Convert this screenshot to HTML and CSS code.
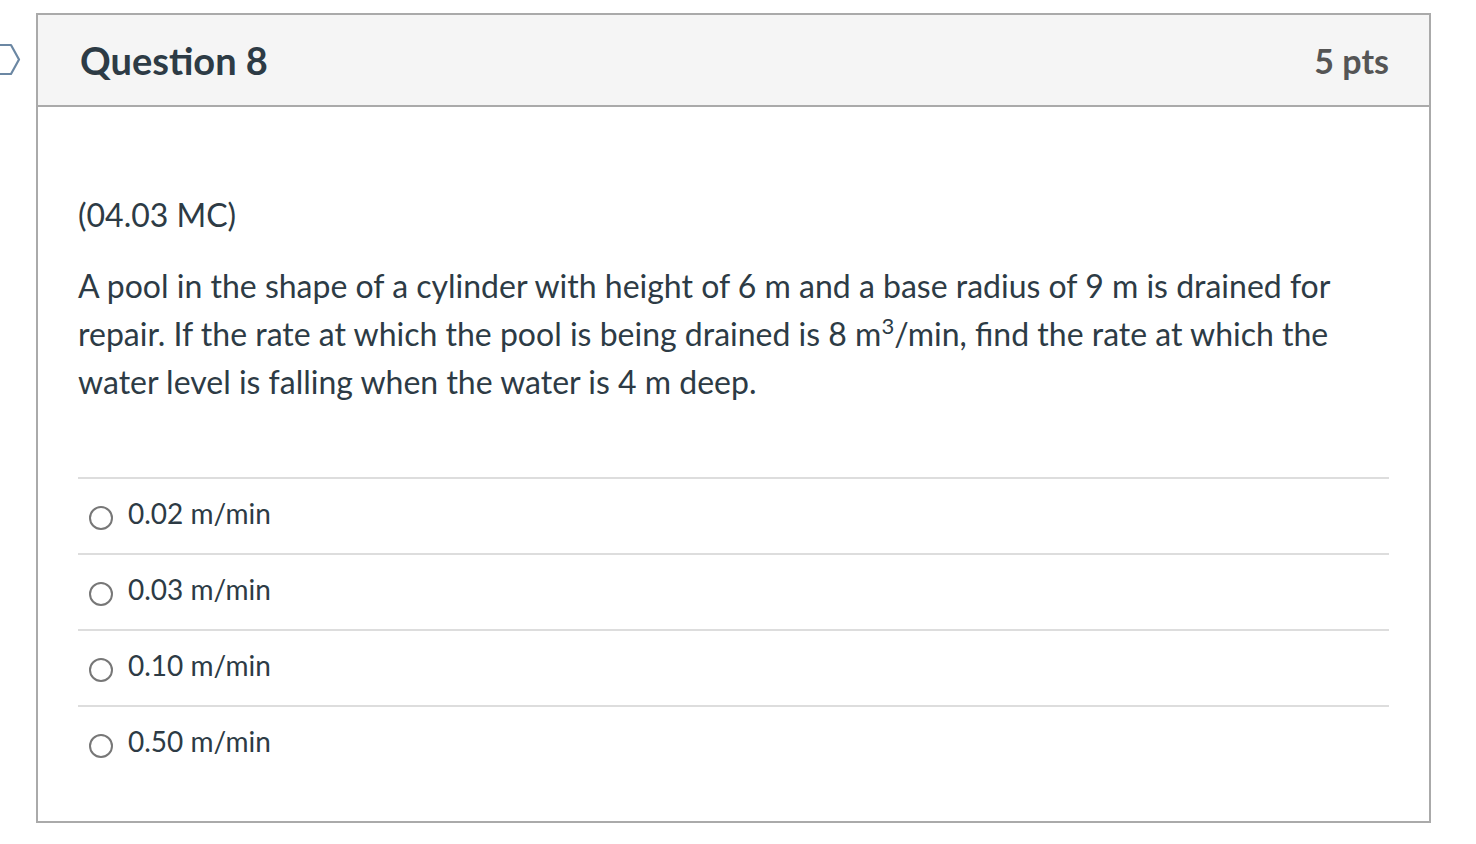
FILE: index.html
```html
<!DOCTYPE html>
<html>
<head>
<meta charset="utf-8">
<link rel="stylesheet" href="styles.css">
</head>
<body>
<div class="page">
  <div class="flag">
    <svg width="24" height="36" viewBox="0 0 24 36"><path d="M-6 2 H11 L19 16.5 L11 31 H-6" fill="none" stroke="#6b87a3" stroke-width="2.2" stroke-linejoin="round"/></svg>
  </div>
  <div class="question">
    <div class="header">
      <h2 class="title">Question 8</h2>
      <span class="pts">5 pts</span>
    </div>
    <div class="content">
      <p class="code">(04.03 MC)</p>
      <p class="text">A pool in the shape of a cylinder with height of 6 m and a base radius of 9 m is drained for repair. If the rate at which the pool is being drained is 8 m<sup>3</sup>/min, find the rate at which the water level is falling when the water is 4 m deep.</p>
      <div class="answers">
        <label class="answer"><span class="radio"></span><span>0.02 m/min</span></label>
        <label class="answer"><span class="radio"></span><span>0.03 m/min</span></label>
        <label class="answer"><span class="radio"></span><span>0.10 m/min</span></label>
        <label class="answer"><span class="radio"></span><span>0.50 m/min</span></label>
      </div>
    </div>
  </div>
</div>
</body>
</html>
```
FILE: styles.css
```css
html, body {
  margin: 0;
  padding: 0;
  background: #fff;
}
body {
  font-family: Lato, "Open Sans", sans-serif;
  color: #2d3b45;
}
.page {
  position: relative;
  padding: 13px 0 0 36px;
}
.flag {
  position: absolute;
  left: 0;
  top: 43px;
}
.question {
  width: 1391px;
  border: 2px solid #aaaaaa;
  box-sizing: content-box;
}
.header {
  display: flex;
  justify-content: space-between;
  align-items: center;
  height: 90px;
  padding: 0 40px 0 42px;
  background: #f5f5f5;
  border-bottom: 2px solid #aaaaaa;
}
.title {
  margin: 0;
  font-size: 38px;
  font-weight: 700;
  color: #2d3b45;
}
.pts {
  font-size: 34px;
  font-weight: 700;
  color: #555555;
}
.content {
  padding: 84px 40px 40px 40px;
}
.code {
  margin: 0 0 23px 0;
  font-size: 32px;
  line-height: 48px;
}
.text {
  margin: 0;
  font-size: 32px;
  line-height: 48px;
}
.text sup {
  font-size: 22px;
  line-height: 0;
  vertical-align: 12px;
}
.answers {
  margin-top: 71px;
  border-top: 2px solid #dddddd;
}
.answer {
  display: flex;
  align-items: center;
  gap: 15px;
  height: 74px;
  box-sizing: border-box;
  padding: 0 0 6px 11px;
  border-bottom: 2px solid #dddddd;
  font-size: 28px;
}
.answers .answer {
  height: 76px;
}
.answer:last-child {
  border-bottom: none;
  height: 74px;
}
.radio {
  width: 20px;
  height: 20px;
  border: 2px solid #777777;
  border-radius: 50%;
  margin-top: 10px;
}
```
